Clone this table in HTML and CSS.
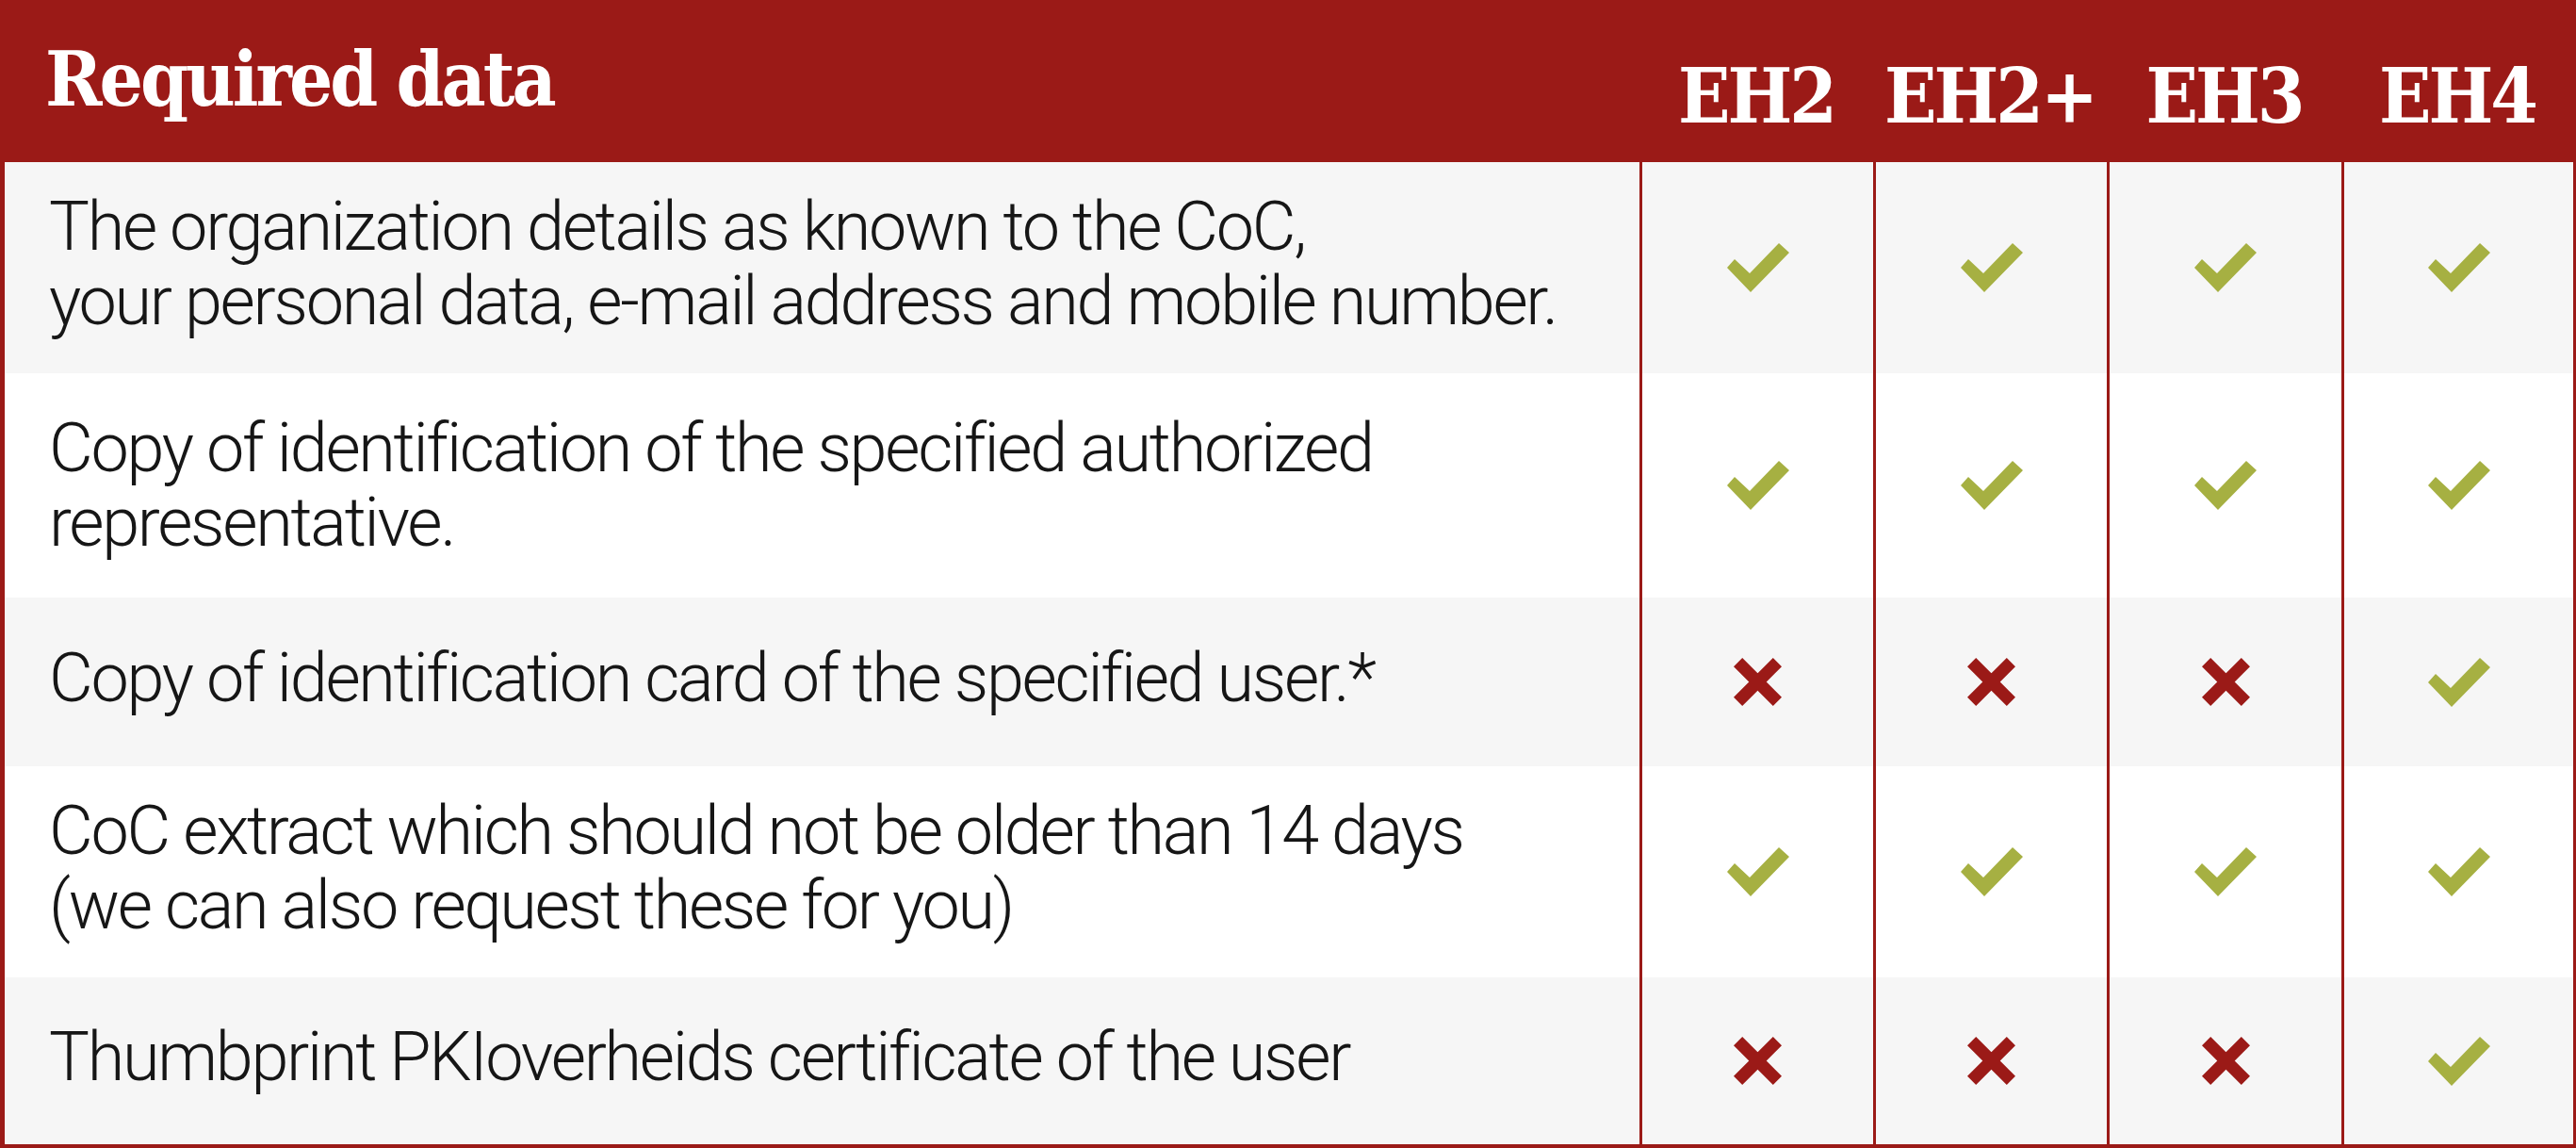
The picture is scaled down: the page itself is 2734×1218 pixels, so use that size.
FILE: index.html
```html
<!DOCTYPE html>
<html lang="en">
<head>
<meta charset="utf-8">
<title>Required data</title>
<link rel="stylesheet" href="styles.css">
</head>
<body>
<div class="table">
  <div class="row head">
    <div class="title">Required data</div>
    <div class="level">EH2</div>
    <div class="level">EH2+</div>
    <div class="level">EH3</div>
    <div class="level">EH4</div>
  </div>

  <div class="row shade h224">
    <div class="desc">The organization details as known to the CoC,<br>your personal data, e-mail address and mobile number.</div>
    <div class="mark"><svg class="yes" viewBox="0 0 66 52"><polygon points="0,26 8,17 24,32 55,0 66,10 25,52"/></svg></div>
    <div class="mark"><svg class="yes" viewBox="0 0 66 52"><polygon points="0,26 8,17 24,32 55,0 66,10 25,52"/></svg></div>
    <div class="mark"><svg class="yes" viewBox="0 0 66 52"><polygon points="0,26 8,17 24,32 55,0 66,10 25,52"/></svg></div>
    <div class="mark"><svg class="yes" viewBox="0 0 66 52"><polygon points="0,26 8,17 24,32 55,0 66,10 25,52"/></svg></div>
  </div>

  <div class="row h238">
    <div class="desc mid">Copy of identification of the specified authorized<br>representative.</div>
    <div class="mark"><svg class="yes" viewBox="0 0 66 52"><polygon points="0,26 8,17 24,32 55,0 66,10 25,52"/></svg></div>
    <div class="mark"><svg class="yes" viewBox="0 0 66 52"><polygon points="0,26 8,17 24,32 55,0 66,10 25,52"/></svg></div>
    <div class="mark"><svg class="yes" viewBox="0 0 66 52"><polygon points="0,26 8,17 24,32 55,0 66,10 25,52"/></svg></div>
    <div class="mark"><svg class="yes" viewBox="0 0 66 52"><polygon points="0,26 8,17 24,32 55,0 66,10 25,52"/></svg></div>
  </div>

  <div class="row shade h179">
    <div class="desc">Copy of identification card of the specified user.*</div>
    <div class="mark"><svg class="no" viewBox="0 0 51 51"><path d="M4.6 4.6L46.4 46.4M46.4 4.6L4.6 46.4"/></svg></div>
    <div class="mark"><svg class="no" viewBox="0 0 51 51"><path d="M4.6 4.6L46.4 46.4M46.4 4.6L4.6 46.4"/></svg></div>
    <div class="mark"><svg class="no" viewBox="0 0 51 51"><path d="M4.6 4.6L46.4 46.4M46.4 4.6L4.6 46.4"/></svg></div>
    <div class="mark"><svg class="yes" viewBox="0 0 66 52"><polygon points="0,26 8,17 24,32 55,0 66,10 25,52"/></svg></div>
  </div>

  <div class="row h224">
    <div class="desc">CoC extract which should not be older than 14 days<br>(we can also request these for you)</div>
    <div class="mark"><svg class="yes" viewBox="0 0 66 52"><polygon points="0,26 8,17 24,32 55,0 66,10 25,52"/></svg></div>
    <div class="mark"><svg class="yes" viewBox="0 0 66 52"><polygon points="0,26 8,17 24,32 55,0 66,10 25,52"/></svg></div>
    <div class="mark"><svg class="yes" viewBox="0 0 66 52"><polygon points="0,26 8,17 24,32 55,0 66,10 25,52"/></svg></div>
    <div class="mark"><svg class="yes" viewBox="0 0 66 52"><polygon points="0,26 8,17 24,32 55,0 66,10 25,52"/></svg></div>
  </div>

  <div class="row shade h177">
    <div class="desc">Thumbprint PKIoverheids certificate of the user</div>
    <div class="mark"><svg class="no" viewBox="0 0 51 51"><path d="M4.6 4.6L46.4 46.4M46.4 4.6L4.6 46.4"/></svg></div>
    <div class="mark"><svg class="no" viewBox="0 0 51 51"><path d="M4.6 4.6L46.4 46.4M46.4 4.6L4.6 46.4"/></svg></div>
    <div class="mark"><svg class="no" viewBox="0 0 51 51"><path d="M4.6 4.6L46.4 46.4M46.4 4.6L4.6 46.4"/></svg></div>
    <div class="mark"><svg class="yes" viewBox="0 0 66 52"><polygon points="0,26 8,17 24,32 55,0 66,10 25,52"/></svg></div>
  </div>
</div>
</body>
</html>
```
FILE: styles.css
```css
html, body {
  margin: 0;
  padding: 0;
  background: #ffffff;
}

.table {
  width: 2734px;
  height: 1218px;
  box-sizing: border-box;
  border-left: 5px solid #9b1a17;
  border-right: 3px solid #9b1a17;
  border-bottom: 4px solid #9b1a17;
  display: flex;
  flex-direction: column;
}

.row {
  display: grid;
  grid-template-columns: 1735px 248px 248px 249px 246px;
  grid-template-rows: 100%;
  background: #ffffff;
  overflow: hidden;
}

.row.shade {
  background: #f6f6f6;
}

.h224 { height: 224px; }
.h238 { height: 238px; }
.h179 { height: 179px; }
.h177 { height: 177px; }

.head {
  height: 172px;
  background: #9b1a17;
  color: #ffffff;
  font-family: "DejaVu Serif Condensed", "DejaVu Serif", serif;
  font-stretch: condensed;
  font-weight: bold;
  font-size: 81px;
  line-height: 81px;
}

.title {
  padding: 43px 0 0 43px;
  letter-spacing: -3px;
  white-space: nowrap;
}

.level {
  padding-top: 61px;
  text-align: center;
  letter-spacing: -3px;
  white-space: nowrap;
}

.desc {
  display: flex;
  align-items: center;
  padding: 0 0 9px 47px;
  font-family: Roboto, "Liberation Sans", sans-serif;
  font-weight: 300;
  font-size: 72px;
  line-height: 79px;
  letter-spacing: -2.3px;
  white-space: nowrap;
  color: #161616;
}

.desc.mid {
  padding-bottom: 0;
}

.mark {
  border-left: 3px solid #9b1a17;
  display: flex;
  align-items: center;
  justify-content: center;
}

.yes {
  width: 66px;
  height: 52px;
  fill: #a6b042;
}

.no {
  width: 51px;
  height: 51px;
  fill: none;
  stroke: #9b1a17;
  stroke-width: 13;
}
```
